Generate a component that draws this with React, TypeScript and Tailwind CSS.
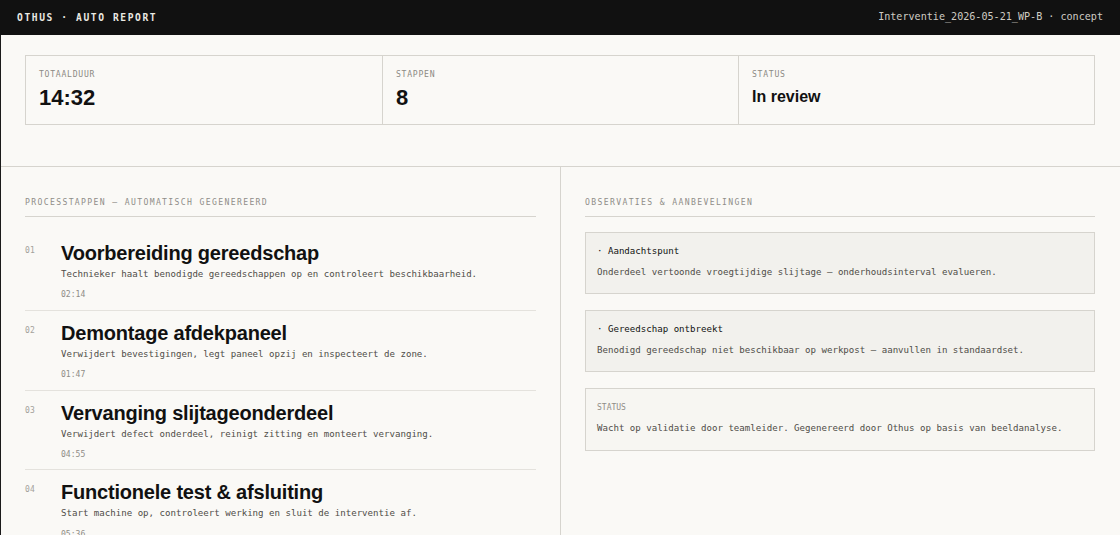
import React from "react";

const steps = [
  { n: "01", title: "Voorbereiding gereedschap", desc: "Technieker haalt benodigde gereedschappen op en controleert beschikbaarheid.", time: "02:14" },
  { n: "02", title: "Demontage afdekpaneel", desc: "Verwijdert bevestigingen, legt paneel opzij en inspecteert de zone.", time: "01:47" },
  { n: "03", title: "Vervanging slijtageonderdeel", desc: "Verwijdert defect onderdeel, reinigt zitting en monteert vervanging.", time: "04:55" },
  { n: "04", title: "Functionele test & afsluiting", desc: "Start machine op, controleert werking en sluit de interventie af.", time: "05:36" },
];

const stats = [
  { label: "TOTAALDUUR", value: "14:32", big: true },
  { label: "STAPPEN", value: "8", big: true },
  { label: "STATUS", value: "In review", big: false },
];

export default function App() {
  return (
    <div className="min-h-[535px] bg-[#faf9f6] font-['DejaVu_Sans_Mono',monospace]">
      <header className="h-[35px] bg-[#111111] flex items-center justify-between pl-[17px] pr-[17px]">
        <div className="text-[9.6px] font-bold tracking-[1.6px] text-[#ebe9e3] leading-none">OTHUS · AUTO REPORT</div>
        <div className="text-[10.1px] text-[#cfccc4] leading-none">Interventie_2026-05-21_WP-B · concept</div>
      </header>
      <div className="border-l border-[#1a1a1a]">
        <section className="pl-[24px] pr-[25px] pt-[20px] pb-[41px] border-b border-[#d6d4ce]">
          <div className="grid grid-cols-3 h-[70px] border border-[#d6d4ce]">
            {stats.map((s, i) => (
              <div key={s.label} className={i === 0 ? "pl-[13px] pt-[12px]" : "pl-[13px] pt-[12px] border-l border-[#d6d4ce]"}>
                <div className="text-[8.1px] leading-[12px] tracking-[0.75px] text-[#8c8a84]">{s.label}</div>
                <div
                  className={
                    s.big
                      ? "mt-[7px] font-['Liberation_Sans',Arial,sans-serif] font-bold text-[22px] leading-none text-[#111111]"
                      : "mt-[9px] font-['Liberation_Sans',Arial,sans-serif] font-bold text-[16px] leading-none text-[#111111]"
                  }
                >
                  {s.value}
                </div>
              </div>
            ))}
          </div>
        </section>
        <div className="grid grid-cols-[559px_1fr]">
          <div className="pl-[24px] pr-[24px] pt-[29px]">
            <div className="text-[8.1px] leading-[12px] tracking-[1.36px] text-[#8f8d88] pb-[8px] border-b border-[#d6d4ce]">
              PROCESSTAPPEN — AUTOMATISCH GEGENEREERD
            </div>
            <div className="mt-[14px]">
              {steps.map((s) => (
                <div key={s.n} className="flex pt-[10px] pb-[9.5px] border-b border-[#e4e2dd]">
                  <div className="w-[36px] shrink-0 pt-[4px] text-[8px] leading-[12px] tracking-[0.2px] text-[#a3a19b]">{s.n}</div>
                  <div className="flex-1">
                    <div className="font-['Liberation_Sans',Arial,sans-serif] font-bold text-[20px] leading-[24px] tracking-[-0.2px] text-[#111111]">
                      {s.title}
                    </div>
                    <div className="mt-[3px] text-[9.1px] leading-[13.65px] text-[#4f4d48]">{s.desc}</div>
                    <div className="mt-[6.6px] text-[8.1px] leading-[12px] text-[#8e8c86]">{s.time}</div>
                  </div>
                </div>
              ))}
            </div>
          </div>
          <div className="border-l border-[#d6d4ce] pl-[24px] pr-[25px] pt-[29px]">
            <div className="text-[8.1px] leading-[12px] tracking-[1.36px] text-[#8f8d88] pb-[8px] border-b border-[#d6d4ce]">
              OBSERVATIES &amp; AANBEVELINGEN
            </div>
            <div className="mt-[15px] flex flex-col gap-[16px]">
              <div className="border border-[#d6d4ce] bg-[#f2f1ed] px-[11px] pt-[12px] pb-[13.5px]">
                <div className="text-[9.1px] leading-[13.65px] text-[#111111]">· Aandachtspunt</div>
                <div className="mt-[7.4px] text-[9.1px] leading-[13.65px] text-[#4f4d48]">
                  Onderdeel vertoonde vroegtijdige slijtage — onderhoudsinterval evalueren.
                </div>
              </div>
              <div className="border border-[#d6d4ce] bg-[#f2f1ed] px-[11px] pt-[12px] pb-[13.5px]">
                <div className="text-[9.1px] leading-[13.65px] text-[#111111]">· Gereedschap ontbreekt</div>
                <div className="mt-[7.4px] text-[9.1px] leading-[13.65px] text-[#4f4d48]">
                  Benodigd gereedschap niet beschikbaar op werkpost — aanvullen in standaardset.
                </div>
              </div>
              <div className="border border-[#d6d4ce] bg-[#f7f6f2] px-[11px] pt-[12px] pb-[13.5px]">
                <div className="text-[8px] leading-[13.65px] text-[#8f8d88]">STATUS</div>
                <div className="mt-[7.4px] text-[9.1px] leading-[13.65px] text-[#4f4d48]">
                  Wacht op validatie door teamleider. Gegenereerd door Othus op basis van beeldanalyse.
                </div>
              </div>
            </div>
          </div>
        </div>
      </div>
    </div>
  );
}
